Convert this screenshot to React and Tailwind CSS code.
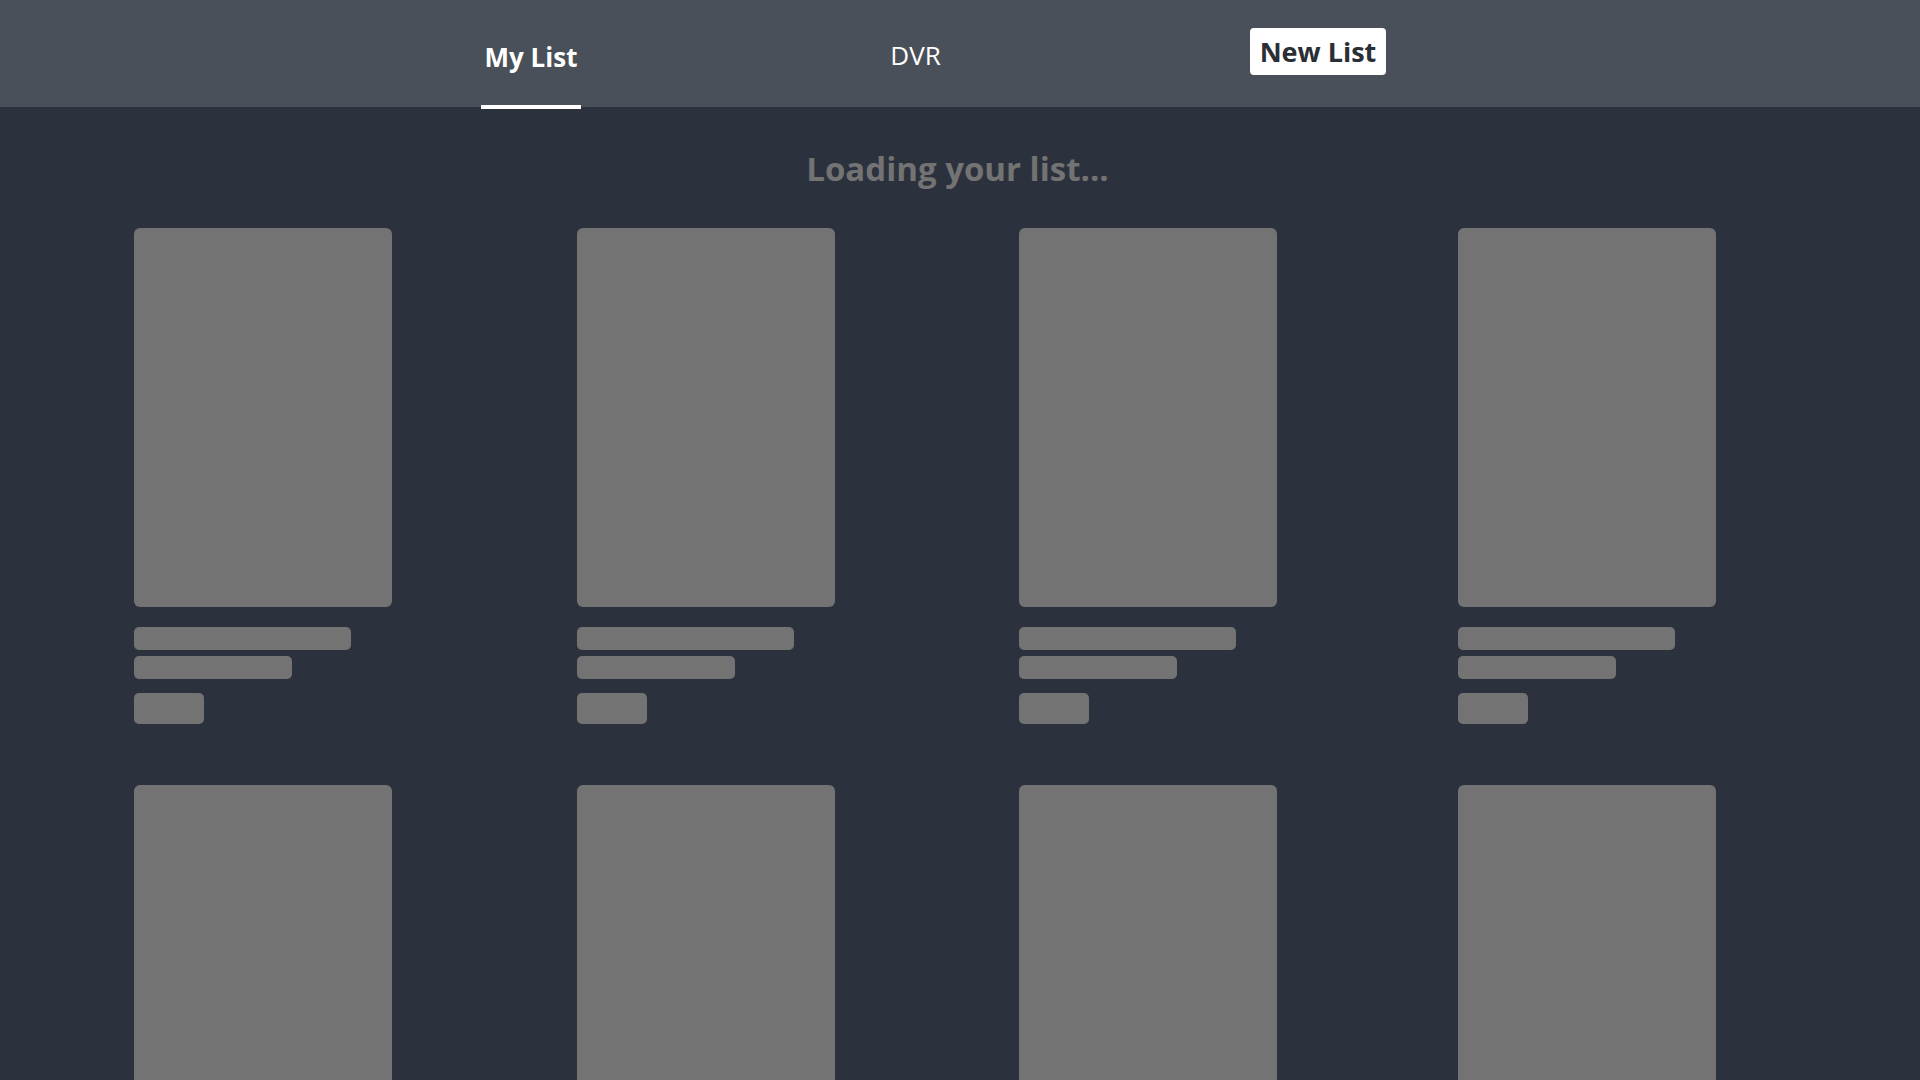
import React from 'react';

const cards = Array.from({ length: 8 }, (_, i) => i);

function SkeletonCard() {
  return (
    <div className="flex flex-col w-[258px]">
      <div className="h-[379px] w-full rounded-md bg-[#737373]" />
      <div className="mt-[20px] h-[23px] w-[217px] rounded-[5px] bg-[#737373]" />
      <div className="mt-[6px] h-[23px] w-[158px] rounded-[5px] bg-[#737373]" />
      <div className="mt-[14px] h-[31px] w-[70px] rounded-[5px] bg-[#737373]" />
    </div>
  );
}

export default function App() {
  return (
    <div className="min-h-screen h-[1080px] overflow-hidden bg-[#2c323d] font-['Open_Sans',sans-serif]">
      {/* Tabs */}
      <header className="h-[107px] bg-[#495059] flex items-start gap-[305px] pl-[481px]">
        <div className="relative h-full w-[100px] flex justify-center">
          <span className="mt-[39px] leading-[36px] text-[26px] font-bold text-white">My List</span>
          <div className="absolute left-0 right-0 -bottom-[2px] h-1 bg-white" />
        </div>
        <div className="h-full w-[59px] flex justify-center">
          <span className="mt-[37px] leading-[36px] text-[26px] text-white">DVR</span>
        </div>
        <button className="mt-[28px] h-[47px] w-[136px] rounded-[4px] bg-white text-[27px] font-bold leading-[33px] text-[#2a2e35]">
          New List
        </button>
      </header>

      <h2 className="mt-[40px] text-center text-[33px] font-bold leading-[44px] text-[#737373] pr-[5px]">
        Loading your list...
      </h2>

      <div className="mt-[37px] grid grid-cols-[443px_442px_439px_1fr] gap-y-[61px] pl-[134px]">
        {cards.map((i) => (
          <SkeletonCard key={i} />
        ))}
      </div>
    </div>
  );
}
